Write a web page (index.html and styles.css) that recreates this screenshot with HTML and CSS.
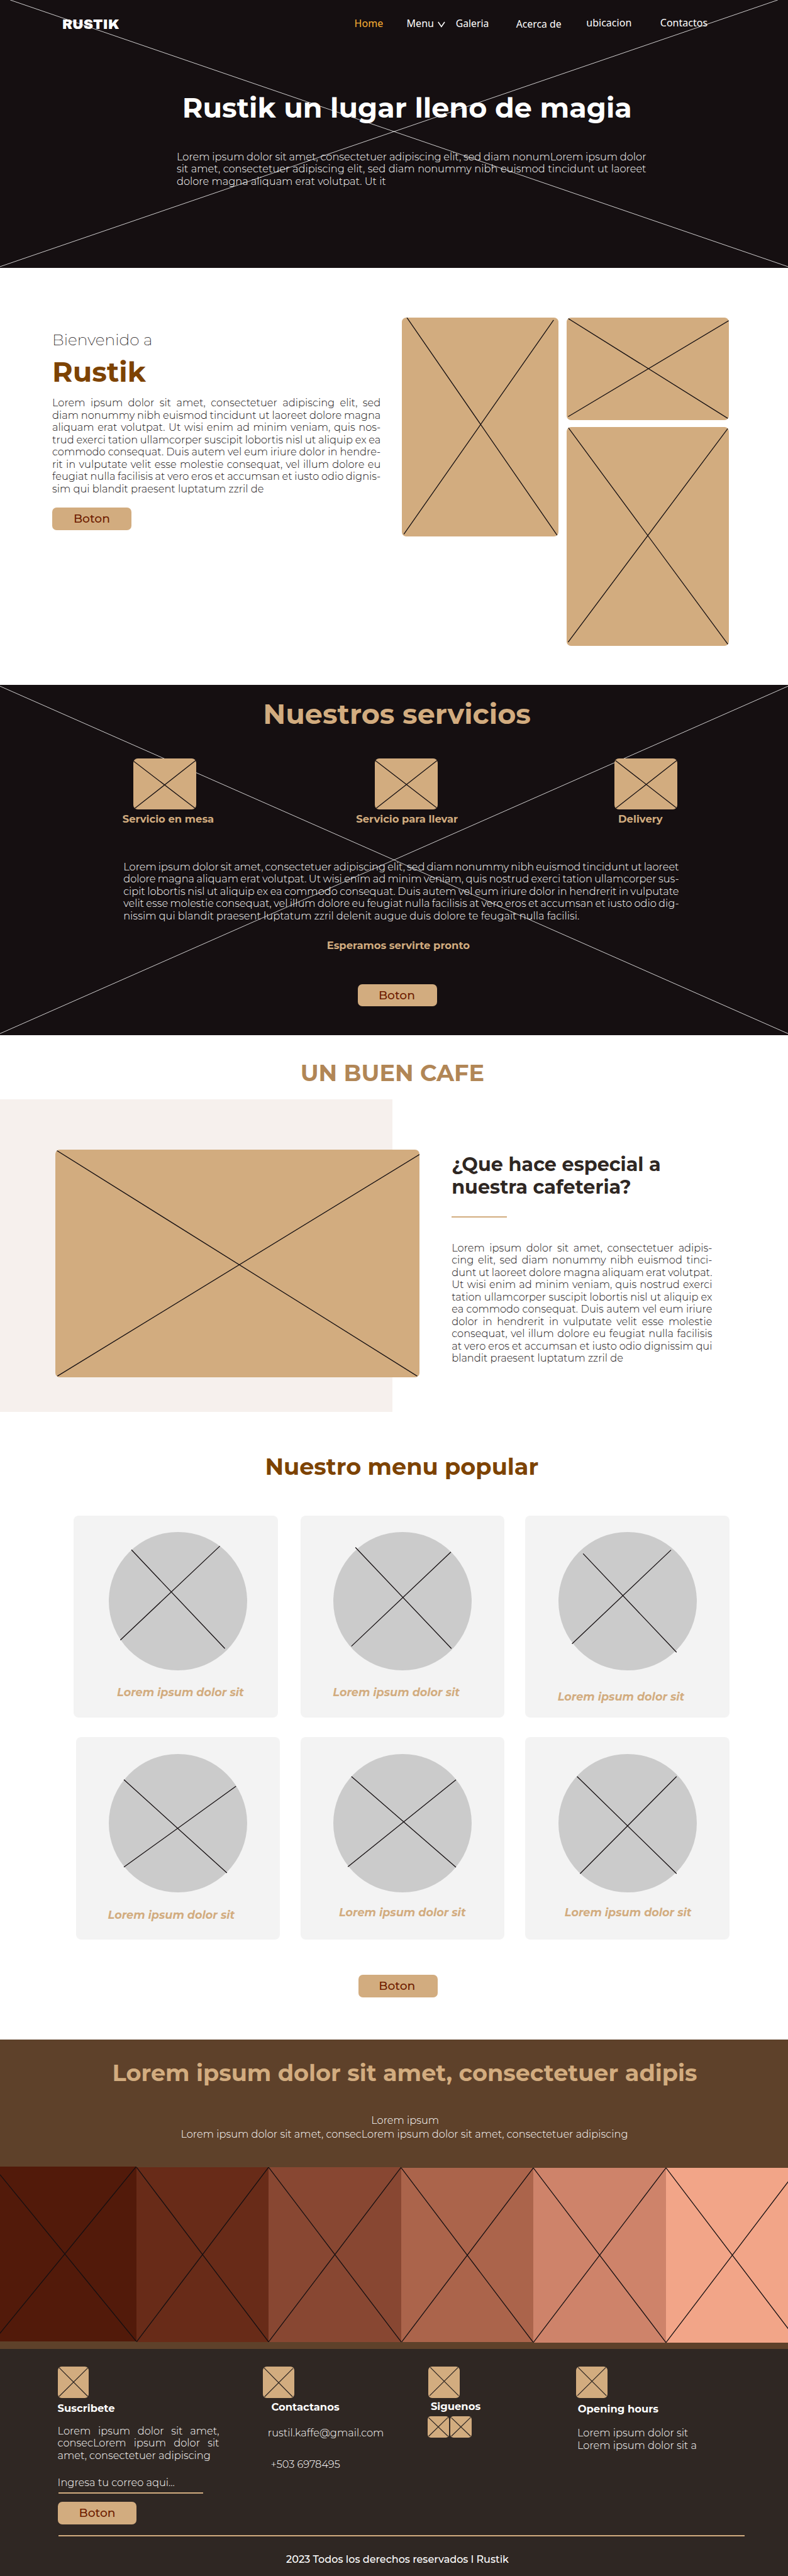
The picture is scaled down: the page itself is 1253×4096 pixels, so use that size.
FILE: index.html
```html
<!DOCTYPE html>
<html lang="es">
<head>
<meta charset="utf-8">
<title>Rustik</title>
<link rel="stylesheet" href="styles.css">
</head>
<body>

<header class="hero">
  <svg class="backdrop" viewBox="0 0 1253 425.7" preserveAspectRatio="none"><path d="M16.3 0L1253 424M1236.7 0L0 424"/></svg>
  <nav class="nav">
    <span class="logo">RUSTIK</span>
    <a class="active">Home</a>
    <a>Menu<svg class="chevron" viewBox="0 0 12 10"><path d="M0.8 1L5.9 8.4L11 1"/></svg></a>
    <a class="galeria">Galeria</a>
    <a class="acerca">Acerca de</a>
    <a class="ubicacion">ubicacion</a>
    <a class="contactos">Contactos</a>
  </nav>
  <h1 class="title-lg hero-title">Rustik un lugar lleno de magia</h1>
  <p class="text hero-text">
    <span class="j">Lorem ipsum dolor sit amet, consectetuer adipiscing elit, sed diam nonumLorem ipsum dolor</span>
    <span class="j">sit amet, consectetuer adipiscing elit, sed diam nonummy nibh euismod tincidunt ut laoreet</span>
    <span>dolore magna aliquam erat volutpat. Ut it</span>
  </p>
</header>

<section class="welcome">
  <div class="welcome-copy">
    <p class="kicker">Bienvenido a</p>
    <h2 class="title-lg brown">Rustik</h2>
    <p class="text welcome-text">
      <span class="j">Lorem ipsum dolor sit amet, consectetuer adipiscing elit, sed</span>
      <span class="j">diam nonummy nibh euismod tincidunt ut laoreet dolore magna</span>
      <span class="j">aliquam erat volutpat. Ut wisi enim ad minim veniam, quis nos-</span>
      <span class="j">trud exerci tation ullamcorper suscipit lobortis nisl ut aliquip ex ea</span>
      <span class="j">commodo consequat. Duis autem vel eum iriure dolor in hendre-</span>
      <span class="j">rit in vulputate velit esse molestie consequat, vel illum dolore eu</span>
      <span class="j">feugiat nulla facilisis at vero eros et accumsan et iusto odio dignis-</span>
      <span>sim qui blandit praesent luptatum zzril de</span>
    </p>
    <a class="btn">Boton</a>
  </div>
  <div class="gallery">
    <svg class="ph ph-a" viewBox="0 0 248.5 347.7"><path d="M8 0L248 347.7M241.3 3.9L3.2 344.5"/></svg>
    <div class="gallery-col">
      <svg class="ph ph-b" viewBox="0 0 258.9 162.6"><path d="M2.4 1.4L256.5 160.4M258.9 4.3L2.4 157.5"/></svg>
      <svg class="ph ph-c" viewBox="0 0 258.9 348"><path d="M2.4 .7L256.5 345.5M256.5 2.1L2.4 342"/></svg>
    </div>
  </div>
</section>

<section class="services">
  <svg class="backdrop" viewBox="0 0 1253 557.4" preserveAspectRatio="none"><path d="M0 2.1L1253 554.5M1253 2.1L0 554.5"/></svg>
  <h2 class="title-lg services-title">Nuestros servicios</h2>
  <div class="service-row">
    <div class="service s1">
      <svg class="ph ph-s" viewBox="0 0 99.9 81.5"><path d="M0 4L98.3 79.3M99.1 3.2L2.4 79.3"/></svg>
      <h3 class="label">Servicio en mesa</h3>
    </div>
    <div class="service s2">
      <svg class="ph ph-s" viewBox="0 0 99.9 81.5"><path d="M.8 3.2L99.1 79M99.1 3.2L2.4 79"/></svg>
      <h3 class="label">Servicio para llevar</h3>
    </div>
    <div class="service s3">
      <svg class="ph ph-s" viewBox="0 0 99.9 81.5"><path d="M1.6 3.2L99.1 79M99.1 3.2L2.4 79"/></svg>
      <h3 class="label">Delivery</h3>
    </div>
  </div>
  <p class="text services-text">
    <span class="j">Lorem ipsum dolor sit amet, consectetuer adipiscing elit, sed diam nonummy nibh euismod tincidunt ut laoreet</span>
    <span class="j">dolore magna aliquam erat volutpat. Ut wisi enim ad minim veniam, quis nostrud exerci tation ullamcorper sus-</span>
    <span class="j">cipit lobortis nisl ut aliquip ex ea commodo consequat. Duis autem vel eum iriure dolor in hendrerit in vulputate</span>
    <span class="j">velit esse molestie consequat, vel illum dolore eu feugiat nulla facilisis at vero eros et accumsan et iusto odio dig-</span>
    <span>nissim qui blandit praesent luptatum zzril delenit augue duis dolore te feugait nulla facilisi.</span>
  </p>
  <p class="label services-note">Esperamos servirte pronto</p>
  <a class="btn services-btn">Boton</a>
</section>

<section class="coffee">
  <h2 class="title-md coffee-title">UN BUEN CAFE</h2>
  <div class="feature">
    <svg class="ph ph-f" viewBox="0 0 579.3 361.6"><path d="M0 0L575.4 360.1M579.3 7.5L3.2 360.1"/></svg>
    <div class="feature-copy">
      <h3 class="feature-title">¿Que hace especial a<br>nuestra cafeteria?</h3>
      <div class="rule"></div>
      <p class="text feature-text">
        <span class="j">Lorem ipsum dolor sit amet, consectetuer adipis-</span>
        <span class="j">cing elit, sed diam nonummy nibh euismod tinci-</span>
        <span class="j">dunt ut laoreet dolore magna aliquam erat volutpat.</span>
        <span class="j">Ut wisi enim ad minim veniam, quis nostrud exerci</span>
        <span class="j">tation ullamcorper suscipit lobortis nisl ut aliquip ex</span>
        <span class="j">ea commodo consequat. Duis autem vel eum iriure</span>
        <span class="j">dolor in hendrerit in vulputate velit esse molestie</span>
        <span class="j">consequat, vel illum dolore eu feugiat nulla facilisis</span>
        <span class="j">at vero eros et accumsan et iusto odio dignissim qui</span>
        <span>blandit praesent luptatum zzril de</span>
      </p>
    </div>
  </div>
</section>

<section class="menu">
  <h2 class="title-md menu-title">Nuestro menu popular</h2>
  <div class="card-row">
    <article class="card c1">
      <svg class="dish" viewBox="0 0 220 220"><circle cx="110" cy="110" r="110"/><path d="M36 28.3L184.6 185.3M176.6 22.4L18.4 171.7"/></svg>
      <h3>Lorem ipsum dolor sit</h3>
    </article>
    <article class="card c2">
      <svg class="dish" viewBox="0 0 220 220"><circle cx="110" cy="110" r="110"/><path d="M35.2 24.5L187.8 185.3M187 31.8L28.8 181.6"/></svg>
      <h3>Lorem ipsum dolor sit</h3>
    </article>
    <article class="card c3">
      <svg class="dish" viewBox="0 0 220 220"><circle cx="110" cy="110" r="110"/><path d="M39.2 34.4L187.8 191.2M179 28.6L21.6 177.8"/></svg>
      <h3>Lorem ipsum dolor sit</h3>
    </article>
  </div>
  <div class="card-row">
    <article class="card c4">
      <svg class="dish" viewBox="0 0 220 220"><circle cx="110" cy="110" r="110"/><path d="M24 40.8L187.8 189.1M202.2 51.3L24 179.8"/></svg>
      <h3>Lorem ipsum dolor sit</h3>
    </article>
    <article class="card c5">
      <svg class="dish" viewBox="0 0 220 220"><circle cx="110" cy="110" r="110"/><path d="M28.8 35.8L195 180.1M195 41.1L23.2 179.2"/></svg>
      <h3>Lorem ipsum dolor sit</h3>
    </article>
    <article class="card c6">
      <svg class="dish" viewBox="0 0 220 220"><circle cx="110" cy="110" r="110"/><path d="M29.6 35.8L187.8 190.3M187.8 35.8L34.4 190.3"/></svg>
      <h3>Lorem ipsum dolor sit</h3>
    </article>
  </div>
  <a class="btn menu-btn">Boton</a>
</section>

<section class="palette">
  <h2 class="title-md palette-title">Lorem ipsum dolor sit amet, consectetuer adipis</h2>
  <p class="text palette-a">Lorem ipsum</p>
  <p class="text palette-b">Lorem ipsum dolor sit amet, consecLorem ipsum dolor sit amet, consectetuer adipiscing</p>
  <div class="strips">
    <svg class="strip p1" viewBox="0 0 216.6 277.8"><path d="M0 12.8L216.6 277.8M216.6 0L-10.4 277.8"/></svg>
    <svg class="strip p2" viewBox="0 0 210.1 277.8"><path d="M0 0L210.1 277.8M210.1 0L0 277.8"/></svg>
    <svg class="strip p3" viewBox="0 0 211 277.8"><path d="M0 0L211 277.8M211 0L0 277.8"/></svg>
    <svg class="strip p4" viewBox="0 0 210.1 277.8"><path d="M0 0L210.1 277.8M210.1 0L0 277.8"/></svg>
    <svg class="strip p5" viewBox="0 0 211 277.8"><path d="M0 0L211 277.8M211 0L0 277.8"/></svg>
    <svg class="strip p6" viewBox="0 0 194.2 277.8"><path d="M0 0L211 277.8M211 0L0 277.8"/></svg>
  </div>
</section>

<footer class="footer">
  <div class="footer-cols">
    <div class="f1">
      <svg class="ph ph-i" viewBox="0 0 49.5 49.5"><path d="M1.7 1.4L47.9 47.8M47.9 1.9L1.7 47.8"/></svg>
      <h4 class="label">Suscribete</h4>
      <p class="text f1-text">
        <span class="j">Lorem ipsum dolor sit amet,</span>
        <span class="j">consecLorem ipsum dolor sit</span>
        <span>amet, consectetuer adipiscing</span>
      </p>
      <div class="text field">Ingresa tu correo aqui...</div>
      <div class="field-line"></div>
      <a class="btn">Boton</a>
    </div>
    <div class="f2">
      <svg class="ph ph-i" viewBox="0 0 49.5 49.5"><path d="M1.7 1.9L47.4 48.3M47.9 2.9L2.5 48.3"/></svg>
      <h4 class="label">Contactanos</h4>
      <p class="text mail">rustil.kaffe@gmail.com</p>
      <p class="text phone">+503 6978495</p>
    </div>
    <div class="f3">
      <svg class="ph ph-i" viewBox="0 0 49.5 49.5"><path d="M3.3 1.4L48.3 46.4M47.4 1.4L2.1 46.4"/></svg>
      <h4 class="label">Siguenos</h4>
      <div class="social">
        <svg class="ph ph-m" viewBox="0 0 34 33.9"><path d="M1.7 2.4L32.3 31.8M32.3 1.9L1.7 31.8"/></svg>
        <svg class="ph ph-m" viewBox="0 0 34 33.9"><path d="M1.7 2.4L32.3 31.8M32.3 1.9L1.7 31.8"/></svg>
      </div>
    </div>
    <div class="f4">
      <svg class="ph ph-i" viewBox="0 0 49.5 49.5"><path d="M3.3 1.4L48.3 46.4M47.4 1.4L2.1 46.4"/></svg>
      <h4 class="label">Opening hours</h4>
      <p class="text hours"><span>Lorem ipsum dolor sit</span><span>Lorem ipsum dolor sit a</span></p>
    </div>
  </div>
  <div class="divider"></div>
  <p class="copyright">2023 Todos los derechos reservados l Rustik</p>
</footer>

</body>
</html>
```

FILE: styles.css
```css
* { box-sizing: border-box; margin: 0; padding: 0; }

:root {
  --ink: #150f11;
  --tan: #d2ac7f;
  --espresso: #2f2723;
  --brown: #7d4302;
  --wine: #6e1d00;
}

body {
  width: 1253px;
  height: 4096px;
  overflow: hidden;
  background: #fff;
  color: var(--ink);
  font-family: "Montserrat", "Inter", sans-serif;
}

section, header, footer { display: flow-root; position: relative; }
svg { display: block; flex: none; }

/* Type */
.title-lg { font-size: 44.5px; line-height: 54px; font-weight: 700; white-space: nowrap; }
.title-md { font-size: 36.65px; line-height: 44px; font-weight: 700; white-space: nowrap; }
.label { font-size: 16.4px; line-height: 20px; font-weight: 700; white-space: nowrap; }
.text { font-size: 16.25px; line-height: 19.55px; font-weight: 300; white-space: nowrap; }
.text span { display: block; }
.text .j { text-align: justify; text-align-last: justify; word-spacing: -1.6px; }
.brown { color: var(--brown); }

.btn {
  display: block;
  width: 125.9px;
  height: 35.9px;
  border-radius: 7px;
  background: var(--tan);
  color: var(--wine);
  font-size: 18.7px;
  line-height: 35px;
  font-weight: 500;
  text-align: center;
}

/* Crossed placeholders */
.ph { background: var(--tan); border-radius: 7px; }
.ph path { stroke: var(--ink); stroke-width: 1.3; fill: none; }
.backdrop { position: absolute; inset: 0; width: 100%; height: 100%; }
.backdrop path { stroke: #fff; stroke-width: .8; fill: none; }
.backdrop ~ * { position: relative; }

/* Hero */
.hero { height: 425.7px; background: var(--ink); color: #fff; }
.nav {
  display: grid;
  grid-template-columns: 464.2px 83px 78.1px 96px 111.6px 117.5px auto;
  align-items: start;
  height: 60px;
  padding: 26.2px 0 0 99.4px;
}
.nav a { font: 400 16.05px/22px "Noto Sans", "Open Sans", sans-serif; white-space: nowrap; display: flex; }
.nav .active { color: #fbb034; }
.nav .galeria { font-size: 15.75px; }
.nav .acerca { font-size: 15.8px; margin-top: 1.1px; }
.nav .ubicacion { margin-top: -1.1px; }
.nav .contactos { margin-top: -.8px; }
.logo { font: 400 21.3px/22px "Archivo Black", "Montserrat", sans-serif; margin: 2px 0 0 -.6px; }
.chevron { width: 12px; height: 10px; margin: 8px 0 0 5.6px; }
.chevron path { stroke: #fff; stroke-width: 1.6; fill: none; }
.hero-title { margin: 84.4px 0 0 289.8px; }
.hero-text { width: 746.6px; margin: 41.5px 0 0 281px; }

/* Welcome */
.welcome { height: 663px; display: flex; }
.welcome-copy { width: 639.3px; padding: 99.5px 0 0 83px; }
.kicker { font-size: 24.95px; line-height: 30px; font-weight: 200; }
.welcome-copy .title-lg { margin-top: 9px; }
.welcome-text { width: 522.3px; margin: 12.8px 0 20.1px; }
.gallery { display: flex; align-items: flex-start; gap: 12.8px; padding-top: 79.6px; }
.gallery-col { display: flex; flex-direction: column; gap: 11.1px; }
.ph-a { width: 248.5px; height: 347.7px; }
.ph-b { width: 258.9px; height: 162.6px; }
.ph-c { width: 258.9px; height: 348px; }

/* Services */
.services { height: 557.4px; background: var(--ink); color: #fff; }
.services-title { margin: 19.3px 0 0 418.3px; color: var(--tan); }
.service-row { display: grid; grid-template-columns: 371.6px 411px auto; padding: 43.7px 0 0 194.7px; }
.ph-s { width: 99.9px; height: 81.5px; }
.service .label { margin-top: 5.1px; color: var(--tan); }
.s1 .ph { margin-left: 17.1px; }
.s2 .ph { margin-left: 29.8px; }
.s3 .label { margin-left: 5.8px; }
.services-text { width: 883.4px; margin: 56.3px 0 0 196.2px; }
.services-note { margin: 27px 0 0 519.7px; color: var(--tan); }
.services-btn { margin: 51.3px 0 0 569px; line-height: 35.9px; padding-right: 2px; }

/* Coffee */
.coffee { height: 598.9px; }
.coffee-title { margin: 37.7px 0 0 477.7px; color: #b18656; }
.feature {
  display: flex;
  align-items: flex-start;
  gap: 51px;
  height: 496.8px;
  margin-top: 20.4px;
  padding: 80.1px 0 0 87.9px;
  background: linear-gradient(#f6f0ed, #f6f0ed) no-repeat 0 0 / 624.1px 100%;
}
.ph-f { width: 579.3px; height: 361.6px; }
.feature-title { margin-top: 5.3px; font-size: 30.3px; line-height: 36.7px; color: var(--espresso); white-space: nowrap; }
.rule { width: 87.9px; height: 2.6px; margin-top: 26.6px; background: var(--tan); }
.feature-text { width: 414.3px; margin-top: 38.4px; }

/* Menu */
.menu { height: 997.6px; }
.menu-title { margin: 65.2px 0 55.9px 421.4px; color: var(--brown); }
.card-row { display: flex; height: 321.3px; margin-bottom: 31.1px; }
.card { width: 324.7px; border-radius: 8px; background: #f3f3f3; padding: 26.3px 0 0 52.6px; }
.c1 { margin-left: 116.9px; padding-left: 56.6px; }
.c2 { margin-left: 36.2px; }
.c3, .c6 { margin-left: 32.5px; }
.c4 { margin-left: 120.8px; }
.c5 { margin-left: 32.3px; }
.dish { width: 220px; height: 220px; overflow: visible; }
.dish circle { fill: #cbcbcb; }
.dish path { stroke: var(--ink); stroke-width: 1.3; fill: none; }
.card h3 { margin: 23.8px 0 0 -1px; font-size: 17.6px; line-height: 21px; font-style: italic; color: var(--tan); white-space: nowrap; }
.c1 h3 { margin-left: 12.6px; }
.c3 h3 { margin-top: 30.5px; margin-left: -.9px; }
.c4 h3 { margin-top: 25.2px; margin-left: -1.8px; }
.c5 h3 { margin-top: 21.4px; margin-left: 8.6px; }
.c6 h3 { margin-top: 21.4px; margin-left: 10.3px; }
.menu-btn { margin: 56px 0 0 569.8px; padding-right: 3px; line-height: 36.8px; }

/* Palette */
.palette { height: 492.5px; background: #5e412a; color: #fff; }
.palette-title { margin: 31.2px 0 0 178.5px; color: var(--tan); }
.palette-a { margin: 43.9px 0 0 590.2px; }
.palette-b { margin: 3.2px 0 0 287.4px; }
.strips { display: flex; margin-top: 41.5px; }
.strip { height: 277.8px; }
.strip path { stroke: var(--ink); stroke-width: 1.3; fill: none; }
.p1 { width: 216.6px; background: #521a0a; }
.p2 { width: 210.1px; background: #682b18; margin-top: .5px; }
.p3 { width: 211px; background: #884732; margin-top: .8px; }
.p4 { width: 210.1px; background: #ab644b; margin-top: 1.1px; }
.p5 { width: 211px; background: #ce836a; margin-top: 1.6px; }
.p6 { width: 194.2px; background: #f2a588; margin-top: 2px; }

/* Footer */
.footer { height: 360.9px; background: var(--espresso); color: #fff; }
.footer-cols { display: grid; grid-template-columns: 326.7px 261.6px 236.4px auto; height: 279.1px; padding: 28.4px 0 0 91.6px; }
.footer .ph path { stroke: var(--espresso); }
.ph-i { width: 49.5px; height: 49.5px; border-radius: 6px; }
.f1 .label { margin-top: 6.3px; }
.f1-text { width: 257px; margin-top: 16.4px; }
.f1-text span.j { word-spacing: 0; }
.field { margin-top: 23.3px; }
.field-line { width: 229.4px; height: 1.6px; margin: 6px 0 13.2px 1.6px; background: var(--tan); }
.f2 .label { margin: 3.7px 0 0 13.2px; }
.mail { margin: 22.1px 0 0 7.5px; }
.phone { margin: 30.9px 0 0 12.2px; }
.f3 .ph-i { margin-left: 1.2px; }
.f3 .label { margin: 3px 0 0 5px; }
.social { display: flex; gap: 2px; margin-top: 5.7px; }
.ph-m { width: 34px; height: 33.9px; border-radius: 5px; }
.f4 .label { margin: 6.6px 0 0 2.4px; }
.hours { margin: 19.9px 0 0 1.7px; }
.divider { width: 1090.7px; height: 2px; margin: 17.3px 0 0 93.2px; background: var(--tan); }
.copyright { margin: 26.5px 0 0 455px; font-size: 16.05px; line-height: 19.55px; font-weight: 500; white-space: nowrap; }
```
